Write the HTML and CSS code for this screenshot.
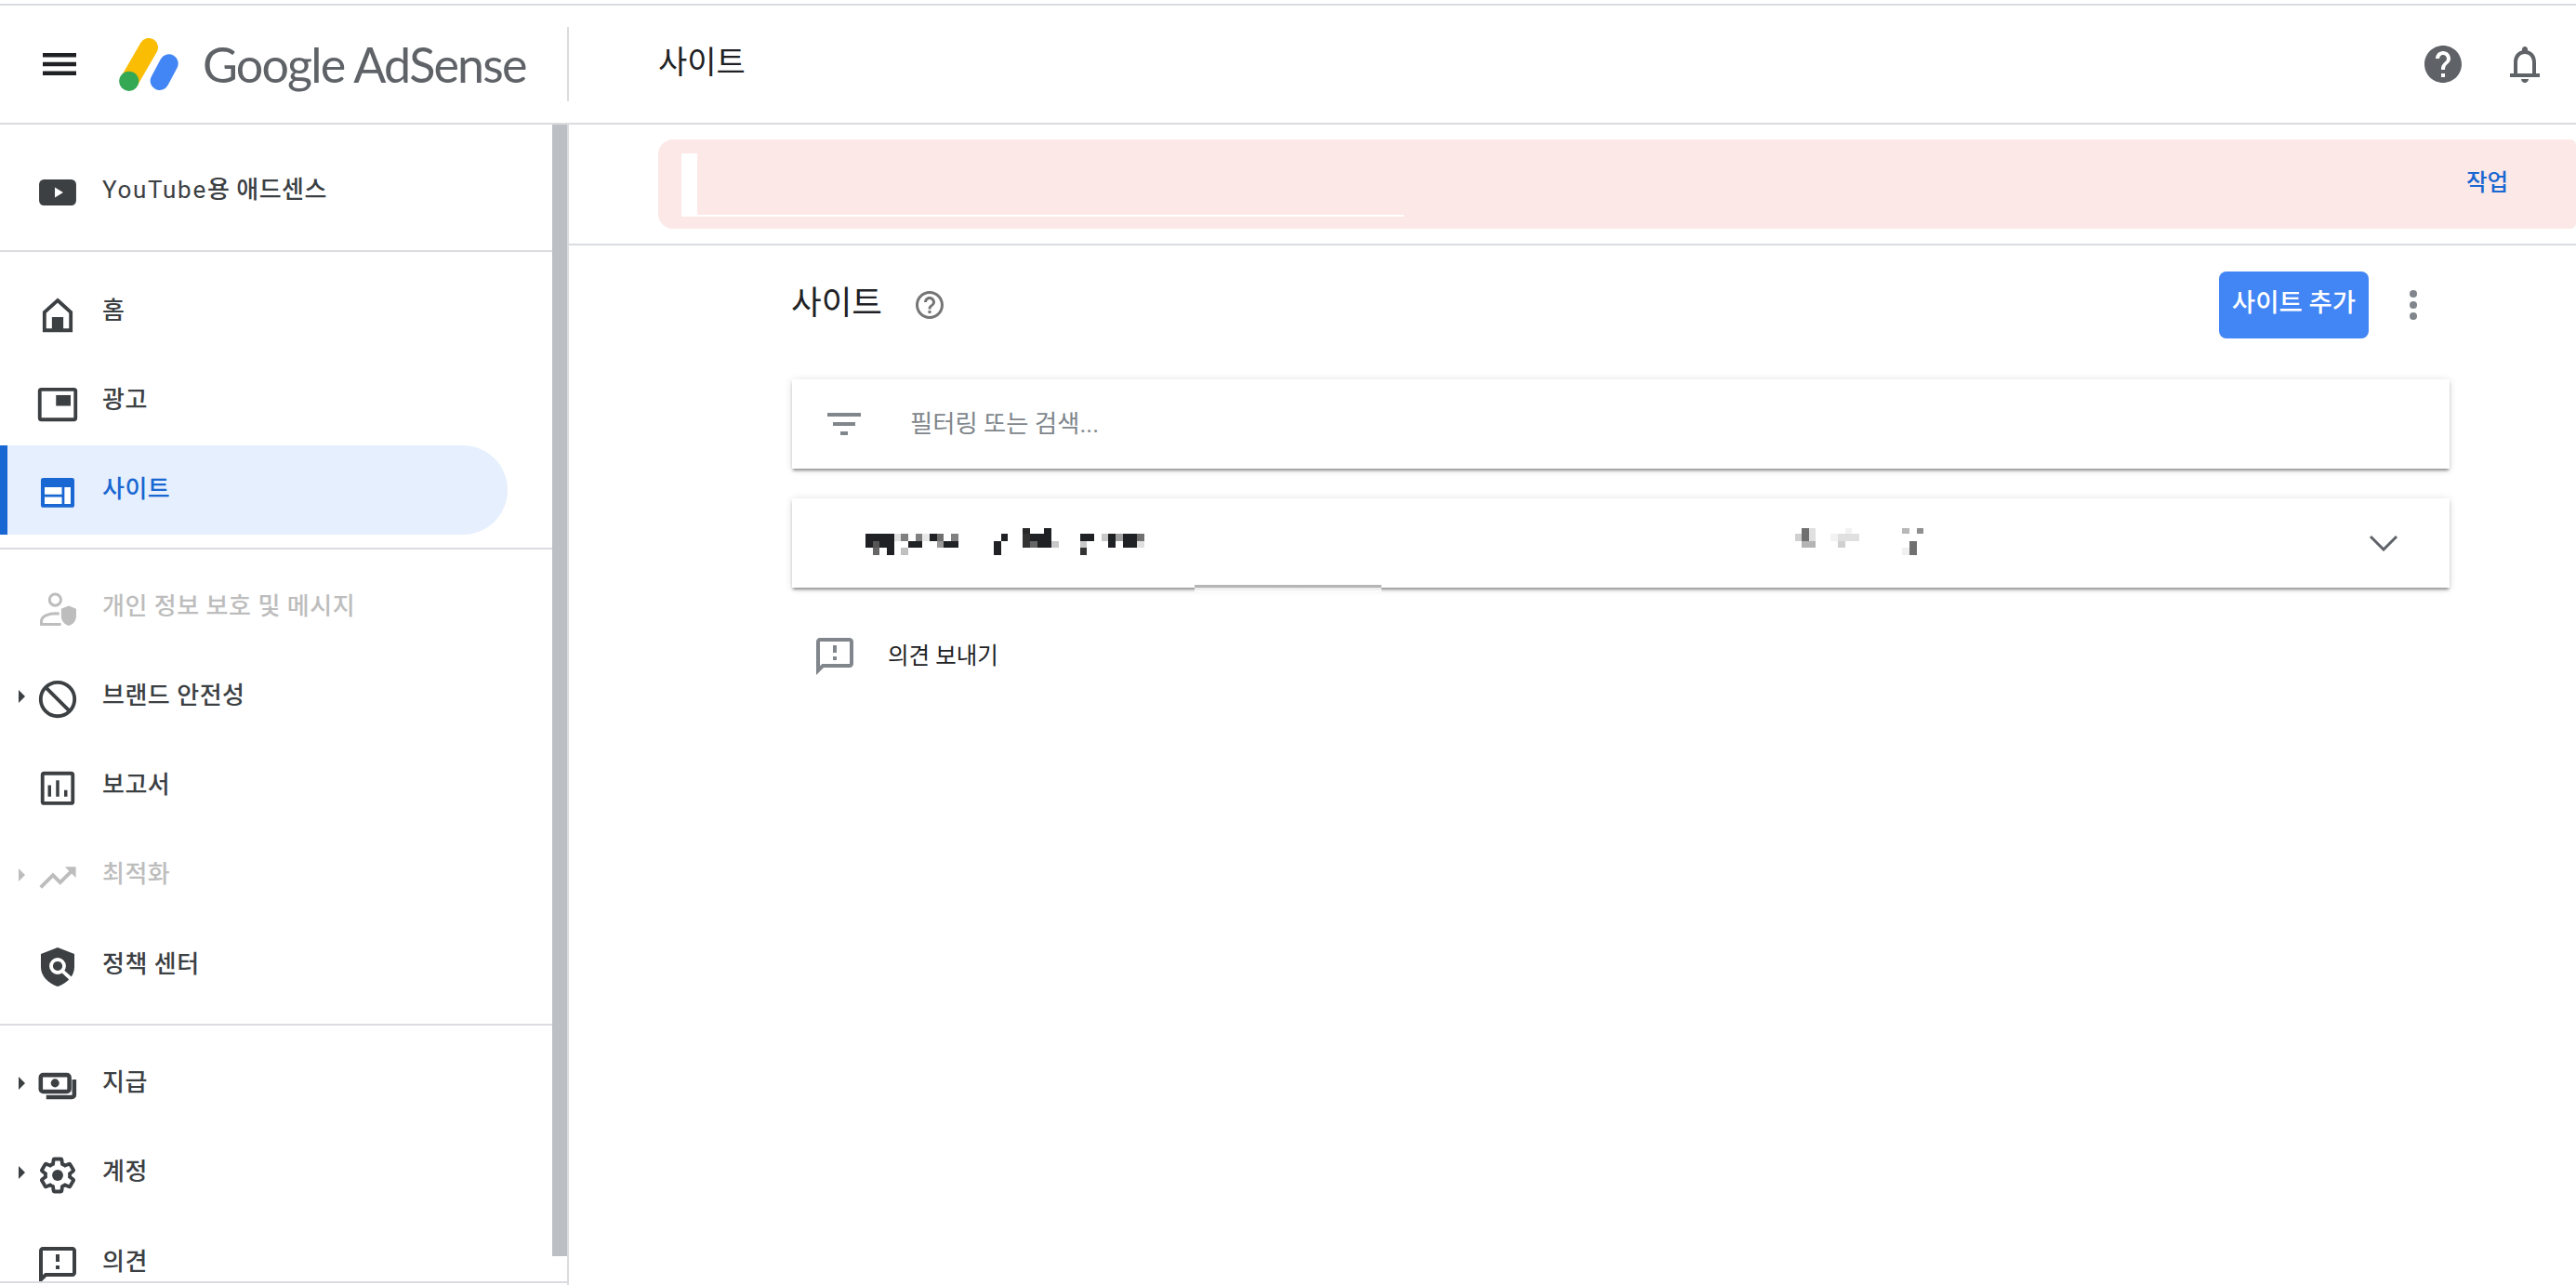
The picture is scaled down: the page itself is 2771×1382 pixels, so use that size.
FILE: index.html
```html
<!DOCTYPE html>
<html lang="ko">
<head>
<meta charset="utf-8">
<title>Google AdSense - 사이트</title>
<link rel="stylesheet" href="styles.css">
</head>
<body>
<div class="app">
  <div class="topline"></div>
  <header class="topbar">
    <div class="brand">
      <svg class="hamburger" viewBox="0 0 36 24"><rect width="36" height="4.5"/><rect y="9.75" width="36" height="4.5"/><rect y="19.5" width="36" height="4.5"/></svg>
      <svg class="logo" viewBox="0 0 64 57">
        <path d="M11.3 45.7 32 10" stroke="#fbbc04" stroke-width="20" stroke-linecap="round" fill="none"/>
        <circle cx="10.8" cy="46.3" r="10.6" fill="#34a853"/>
        <path d="M43.7 46 53.7 27.3" stroke="#4285f4" stroke-width="20" stroke-linecap="round" fill="none"/>
      </svg>
      <span class="wordmark">Google AdSense</span>
    </div>
    <div class="bar-divider"></div>
    <div class="page-title">사이트</div>
    <svg class="top-help" viewBox="2 2 20 20"><path d="M12 2C6.48 2 2 6.48 2 12s4.48 10 10 10 10-4.48 10-10S17.52 2 12 2zm1 17h-2v-2h2v2zm2.07-7.75l-.9.92C13.45 12.9 13 13.5 13 15h-2v-.5c0-1.1.45-2.1 1.17-2.83l1.24-1.26c.37-.36.59-.86.59-1.41 0-1.1-.9-2-2-2s-2 .9-2 2H8c0-2.21 1.79-4 4-4s4 1.79 4 4c0 .88-.36 1.68-.93 2.25z"/></svg>
    <svg class="top-bell" viewBox="4 2.5 16 19.5"><path fill-rule="evenodd" d="M12 22c1.1 0 2-.9 2-2h-4c0 1.1.9 2 2 2zM4 17h2v-6c0-3.07 1.63-5.64 4.5-6.32V4c0-.83.67-1.5 1.5-1.5s1.5.67 1.5 1.5v.68C16.37 5.36 18 7.93 18 11v6h2v2H4zM16 17v-6c0-2.48-1.51-4.5-4-4.5S8 8.52 8 11v6z"/></svg>
  </header>
  <div class="workspace">
    <aside class="sidebar">
      <nav class="nav">
        <div class="nav-section nav-first">
          <a class="nav-row"><span class="caret-slot"></span>
            <svg class="nav-icon" viewBox="0 0 24 24"><rect x=".6" y="4" width="22.8" height="16" rx="3"/><path class="cut" d="M10.3 8.8 15.4 12l-5.1 3.2z"/></svg>
            <span class="nav-label"><span class="latin">YouTube</span>용 애드센스</span></a>
        </div>
        <div class="nav-section nav-second">
          <a class="nav-row"><span class="caret-slot"></span>
            <svg class="nav-icon" viewBox="0 0 24 24"><path class="line" d="M12 4 20.1 11.4V22.4H3.9V11.4z"/><rect x="8.5" y="14.3" width="7" height="8.6"/></svg>
            <span class="nav-label">홈</span></a>
          <a class="nav-row"><span class="caret-slot"></span>
            <svg class="nav-icon" viewBox="0 0 24 24"><rect class="line" x="1" y="3.9" width="22" height="18.5" rx="1"/><rect x="11" y="7.4" width="9" height="6.6"/></svg>
            <span class="nav-label">광고</span></a>
          <a class="nav-row is-active"><span class="caret-slot"></span>
            <svg class="nav-icon" viewBox="0 0 24 24"><rect x="1.7" y="2.9" width="20.6" height="18.1" rx="1.5"/><path class="cut" d="M4 8.6h10.6V13H4zM4 14.6h10.6v4.3H4zM16.2 8.6H20v10.3h-3.8z"/></svg>
            <span class="nav-label">사이트</span></a>
        </div>
        <div class="nav-section nav-third">
          <a class="nav-row is-disabled"><span class="caret-slot"></span>
            <svg class="nav-icon" viewBox="0 0 24 24"><circle class="thin" cx="10.5" cy="6.3" r="3.5"/><path class="thin" d="M2 21.2v-1.7c0-3 4.5-4.8 9-4.8l2 .2"/><path class="thin" d="M1.2 21.4H14"/><path d="M18.8 10l4.6 1.8v4.5c0 3-2 5.2-4.6 6-2.6-.8-4.6-3-4.6-6v-4.5z"/></svg>
            <span class="nav-label">개인 정보 보호 및 메시지</span></a>
          <a class="nav-row"><span class="caret-slot"><i class="caret"></i></span>
            <svg class="nav-icon" viewBox="0 0 24 24"><circle class="line" cx="12" cy="12" r="10.4"/><path class="line" d="M4.6 4.6 19.4 19.4"/></svg>
            <span class="nav-label">브랜드 안전성</span></a>
          <a class="nav-row"><span class="caret-slot"></span>
            <svg class="nav-icon" viewBox="0 0 24 24"><rect class="line" x="2.7" y="2.7" width="18.6" height="18.4" rx="1"/><path d="M6 10h2v7H6zM11 7h2v10h-2zM16 13h2v4h-2z"/></svg>
            <span class="nav-label">보고서</span></a>
          <a class="nav-row is-disabled"><span class="caret-slot"><i class="caret"></i></span>
            <svg class="nav-icon" viewBox="0 0 24 24"><path transform="translate(-1.44 -1.44) scale(1.12)" d="M16 6l2.29 2.29-4.88 4.88-4-4L2 16.59 3.41 18l6-6 4 4 6.3-6.29L22 12V6z"/></svg>
            <span class="nav-label">최적화</span></a>
          <a class="nav-row"><span class="caret-slot"></span>
            <svg class="nav-icon" viewBox="0 0 24 24"><path d="M12 0 22.3 4v8c0 5.5-4.4 10-10.3 12C6 22 1.7 17.5 1.7 12V4z"/><circle class="white-ring" cx="12" cy="11.4" r="4"/><path class="white-ring" d="M15 14.5 21 20"/></svg>
            <span class="nav-label">정책 센터</span></a>
        </div>
        <div class="nav-section nav-fourth">
          <a class="nav-row"><span class="caret-slot"><i class="caret"></i></span>
            <svg class="nav-icon" viewBox="0 0 24 24"><rect class="heavy" x="1.6" y="5.2" width="17.6" height="10.2" rx="1.5"/><circle cx="10.4" cy="10.2" r="2.6"/><path class="heavy" d="M22.2 8v9.5a1.3 1.3 0 0 1-1.3 1.3H5"/></svg>
            <span class="nav-label">지급</span></a>
          <a class="nav-row"><span class="caret-slot"><i class="caret"></i></span>
            <svg class="nav-icon" viewBox="0 0 24 24"><path class="line" d="M19.43 12.98c.04-.32.07-.64.07-.98s-.03-.66-.07-.98l2.11-1.65c.19-.15.24-.42.12-.64l-2-3.46c-.12-.22-.39-.3-.61-.22l-2.49 1c-.52-.4-1.08-.73-1.69-.98l-.38-2.65C14.46 2.18 14.25 2 14 2h-4c-.25 0-.46.18-.49.42l-.38 2.65c-.61.25-1.17.59-1.69.98l-2.49-1c-.23-.09-.49 0-.61.22l-2 3.46c-.13.22-.07.49.12.64l2.11 1.65c-.04.32-.07.65-.07.98s.03.66.07.98l-2.11 1.65c-.19.15-.24.42-.12.64l2 3.46c.12.22.39.3.61.22l2.49-1c.52.4 1.08.73 1.69.98l.38 2.65c.03.24.24.42.49.42h4c.25 0 .46-.18.49-.42l.38-2.65c.61-.25 1.17-.59 1.69-.98l2.49 1c.23.09.49 0 .61-.22l2-3.46c.12-.22.07-.49-.12-.64l-2.11-1.65z"/><circle cx="12" cy="12" r="3.4"/></svg>
            <span class="nav-label">계정</span></a>
          <a class="nav-row"><span class="caret-slot"></span>
            <svg class="nav-icon" viewBox="2 2 20 20"><path d="M20 2H4c-1.1 0-1.99.9-1.99 2L2 22l4-4h14c1.1 0 2-.9 2-2V4c0-1.1-.9-2-2-2zm0 14H5.17L4 17.17V4h16v12zM11 12h2v2h-2zm0-6h2v4h-2z"/></svg>
            <span class="nav-label">의견</span></a>
        </div>
      </nav>
      <div class="scroll-track"><div class="scroll-thumb"></div></div>
    </aside>
    <main class="main">
      <div class="banner-wrap">
        <div class="banner">
          <div class="banner-strip"></div>
          <div class="banner-rule"></div>
          <a class="banner-action">작업</a>
        </div>
      </div>
      <div class="content">
        <div class="title-row">
          <h1 class="title">사이트</h1>
          <svg class="title-help" viewBox="2 2 20 20"><path d="M11 18h2v-2h-2v2zm1-16C6.48 2 2 6.48 2 12s4.48 10 10 10 10-4.48 10-10S17.52 2 12 2zm0 18c-4.41 0-8-3.59-8-8s3.59-8 8-8 8 3.59 8 8-3.59 8-8 8zm0-14c-2.21 0-4 1.79-4 4h2c0-1.1.9-2 2-2s2 .9 2 2c0 2-3 1.75-3 5h2c0-2.25 3-2.5 3-5 0-2.21-1.79-4-4-4z"/></svg>
          <button class="add-btn"><span class="add-btn-text">사이트 추가</span></button>
          <div class="kebab"><i></i><i></i><i></i></div>
        </div>
        <div class="card filter-card">
          <svg class="filter-icon" viewBox="0 0 36 24"><rect width="36" height="4"/><rect x="6" y="10" width="24" height="4"/><rect x="14" y="20" width="8" height="4"/></svg>
          <span class="filter-text">필터링 또는 검색...</span>
        </div>
        <div class="card site-card">
          <svg class="mosaic-left" viewBox="0 0 960 135" shape-rendering="crispEdges">
            <rect x="33" y="42" width="92" height="23" fill="#202124"/><rect x="125" y="42" width="23" height="23" fill="#e0e0e0"/><rect x="148" y="42" width="23" height="23" fill="#808080"/><rect x="194" y="42" width="23" height="23" fill="#808080"/><rect x="217" y="42" width="23" height="23" fill="#e8e8e8"/><rect x="240" y="42" width="23" height="23" fill="#202124"/><rect x="263" y="42" width="23" height="23" fill="#707070"/><rect x="309" y="42" width="23" height="23" fill="#808080"/>
            <rect x="33" y="65" width="23" height="23" fill="#202124"/><rect x="56" y="65" width="23" height="23" fill="#555"/><rect x="79" y="65" width="46" height="23" fill="#202124"/><rect x="171" y="65" width="46" height="23" fill="#202124"/><rect x="263" y="65" width="23" height="23" fill="#999"/><rect x="286" y="65" width="46" height="23" fill="#202124"/>
            <rect x="56" y="88" width="23" height="22" fill="#666"/><rect x="102" y="88" width="23" height="22" fill="#202124"/><rect x="148" y="88" width="23" height="22" fill="#c0c0c0"/>
            <rect x="470" y="42" width="23" height="23" fill="#202124"/><rect x="447" y="65" width="23" height="45" fill="#202124"/>
            <rect x="541" y="24" width="23" height="18" fill="#2a2a2a"/><rect x="610" y="24" width="23" height="18" fill="#202124"/><rect x="541" y="42" width="23" height="46" fill="#333"/><rect x="564" y="42" width="69" height="23" fill="#202124"/><rect x="564" y="65" width="23" height="23" fill="#666"/><rect x="587" y="65" width="46" height="23" fill="#202124"/><rect x="633" y="65" width="23" height="23" fill="#c8c8c8"/>
            <rect x="725" y="42" width="46" height="23" fill="#202124"/><rect x="725" y="65" width="23" height="23" fill="#c8c8c8"/><rect x="725" y="88" width="23" height="22" fill="#333"/>
            <rect x="794" y="42" width="23" height="23" fill="#c8c8c8"/><rect x="817" y="42" width="23" height="46" fill="#202124"/><rect x="840" y="42" width="23" height="23" fill="#a0a0a0"/><rect x="863" y="42" width="46" height="46" fill="#202124"/><rect x="909" y="42" width="23" height="23" fill="#707070"/><rect x="909" y="65" width="23" height="23" fill="#e0e0e0"/>
          </svg>
          <svg class="mosaic-right" viewBox="0 0 480 135" shape-rendering="crispEdges">
            <rect x="54" y="24" width="23" height="41" fill="#707070"/><rect x="77" y="24" width="23" height="41" fill="#e0e0e0"/><rect x="195" y="24" width="22" height="18" fill="#f2f2f2"/><rect x="379" y="24" width="23" height="18" fill="#b8b8b8"/><rect x="425" y="24" width="23" height="18" fill="#909090"/>
            <rect x="32" y="42" width="22" height="23" fill="#d0d0d0"/><rect x="148" y="42" width="23" height="23" fill="#f2f2f2"/><rect x="171" y="42" width="69" height="23" fill="#e0e0e0"/>
            <rect x="54" y="65" width="46" height="23" fill="#b4b4b4"/><rect x="171" y="65" width="23" height="23" fill="#d0d0d0"/><rect x="402" y="65" width="23" height="45" fill="#707070"/><rect x="379" y="88" width="23" height="22" fill="#f0f0f0"/>
          </svg>
          <svg class="chevron" viewBox="0 0 32 18"><path d="M2 2 16 16 30 2"/></svg>
          <div class="card-smear"></div>
        </div>
        <div class="feedback">
          <svg class="feedback-icon" viewBox="2 2 20 20"><path d="M20 2H4c-1.1 0-1.99.9-1.99 2L2 22l4-4h14c1.1 0 2-.9 2-2V4c0-1.1-.9-2-2-2zm0 14H5.17L4 17.17V4h16v12zM11 12h2v2h-2zm0-6h2v4h-2z"/></svg>
          <span class="feedback-text">의견 보내기</span>
        </div>
      </div>
    </main>
  </div>
</div>
</body>
</html>
```

FILE: styles.css
```css
* { box-sizing: border-box; }
html, body { margin: 0; padding: 0; background: #fff; }
body {
  width: 2771px;
  height: 1382px;
  overflow: hidden;
  font-family: Roboto, "Noto Sans CJK KR", sans-serif;
  color: #202124;
}
svg { display: block; flex: none; }

.app { display: flex; flex-direction: column; height: 100%; }
.topline { height: 2px; margin-top: 4px; background: #dadce0; flex: none; }

.topbar {
  display: flex;
  align-items: center;
  flex: none;
  height: 128px;
  border-bottom: 2px solid #dadce0;
}
.brand { display: flex; align-items: center; width: 610px; padding-left: 46px; }
.hamburger { width: 36px; height: 24px; fill: #202124; }
.logo { width: 64px; height: 57px; margin-left: 46px; }
.wordmark {
  margin-left: 26px;
  font-family: Lato, sans-serif;
  font-size: 52px;
  letter-spacing: -1.8px;
  color: #5f6368;
  line-height: 1;
  white-space: nowrap;
}
.bar-divider { width: 2px; height: 80px; background: #dadce0; }
.page-title { margin-left: 96px; margin-bottom: 5px; font-size: 34px; color: #202124; line-height: 1; }
.top-help { width: 40px; height: 40px; margin-left: auto; fill: #5f6368; }
.top-bell { width: 32px; height: 39px; margin-left: 52px; margin-right: 39px; fill: #5f6368; }

.workspace { display: flex; flex: 1; min-height: 0; }
.sidebar { display: flex; width: 610px; margin-bottom: 2px; border-bottom: 2px solid #dadce0; overflow: hidden; }
.nav { width: 594px; flex: none; overflow: hidden; }
.scroll-track { width: 16px; flex: none; }
.scroll-thumb { height: 1217px; background: #bcbfc3; }

.nav-section { border-bottom: 2px solid #dadce0; }
.nav-first { padding: 22px 0 17px; }
.nav-second { padding: 15px 0 14px; }
.nav-third { padding: 13.5px 0 16px; }
.nav-fourth { padding: 13.5px 0 0; border-bottom: 0; }

.nav-row {
  display: flex;
  align-items: center;
  height: 96.2px;
  width: 546px;
  color: #3c4043;
  fill: #3c4043;
  stroke: none;
}
.caret-slot { display: flex; align-items: center; width: 41px; height: 14px; padding-left: 20px; flex: none; }
.caret { display: block; border-left: 7px solid currentColor; border-top: 7px solid transparent; border-bottom: 7px solid transparent; }
.nav-icon { width: 42px; height: 42px; margin-top: 6px; overflow: visible; }
.nav-label { margin-left: 27px; margin-bottom: 1px; font-size: 26px; font-weight: 500; letter-spacing: .5px; white-space: nowrap; line-height: 1; }
.latin { font-weight: 400; letter-spacing: 1.7px; }
.nav-first .nav-icon { margin-top: 6px; }
.nav-fourth .nav-row:last-child .nav-icon { width: 40px; height: 40px; margin: 7px 1px 0; }

.line { fill: none; stroke: currentColor; stroke-width: 2.2; }
.heavy { fill: none; stroke: currentColor; stroke-width: 2.6; }
.thin { fill: none; stroke: currentColor; stroke-width: 1.7; }
.cut { fill: #fff; }
.white-ring { fill: none; stroke: #fff; stroke-width: 2.2; }
.nav-row.is-active {
  color: #1967d2;
  fill: #1967d2;
  background: #e6effd;
  border-radius: 0 48px 48px 0;
  box-shadow: inset 8px 0 0 #1967d2;
}
.nav-row.is-disabled { color: #bdbdbd; fill: #bdbdbd; }

.main { flex: 1; min-width: 0; border-left: 2px solid #dadce0; }
.banner-wrap { padding: 16px 0; padding-left: 96px; border-bottom: 2px solid #dadce0; height: 130px; }
.banner {
  display: flex;
  align-items: center;
  height: 96px;
  padding: 2px 73px 0 25px;
  background: #fce8e6;
  border-radius: 16px 6px 6px 16px;
}
.banner-strip { width: 17px; height: 68px; background: #fff; }
.banner-rule { width: 760px; height: 2px; margin-top: 66px; background: #fff; }
.banner-action { margin-left: auto; margin-bottom: 4px; font-size: 24.5px; font-weight: 500; color: #1967d2; line-height: 1; }

.content { padding: 28px 136px 0 240px; }
.title-row { display: flex; align-items: center; height: 72px; margin-bottom: 44px; }
.title { margin: 0 0 2px -1px; font-size: 35.5px; font-weight: 400; color: #202124; line-height: 1; }
.title-help { width: 30px; height: 30px; margin-left: 36px; fill: #757575; }
.add-btn {
  display: flex;
  align-items: center;
  justify-content: center;
  margin-left: auto;
  width: 161px;
  height: 72px;
  padding: 0 0 4px;
  border: 0;
  border-radius: 8px;
  background: #4285f4;
  color: #fff;
  font-family: inherit;
  font-size: 27.5px;
  font-weight: 500;
  white-space: nowrap;
}
.add-btn-text { line-height: 1; }
.kebab { display: flex; flex-direction: column; gap: 4px; margin-left: 44px; margin-right: 35px; }
.kebab i { display: block; width: 8px; height: 8px; border-radius: 50%; background: #80868b; }

.card {
  position: relative;
  display: flex;
  align-items: center;
  height: 96px;
  background: #fff;
  box-shadow: 0 3px 3px -1px rgba(0,0,0,.4), 0 1px 8px rgba(0,0,0,.14);
}
.filter-card { padding-left: 38px; margin-bottom: 32px; }
.filter-icon { width: 36px; height: 24px; fill: #80868b; }
.filter-text { margin-left: 53px; font-size: 26.3px; color: #80868b; line-height: 1; }
.site-card { padding-left: 68px; }
.mosaic-left { width: 320px; height: 45px; margin-bottom: 3px; }
.mosaic-right { width: 160px; height: 45px; margin-left: 680px; margin-bottom: 3px; }
.chevron { width: 32px; height: 18px; margin-left: auto; margin-right: 55px; fill: none; stroke: #5f6368; stroke-width: 3; }
.card-smear {
  position: absolute;
  left: 433px;
  bottom: -5px;
  width: 201px;
  height: 8px;
  background: linear-gradient(#b5b5b5 0, #b5b5b5 35%, #e9e9e9 40%, #fff 100%);
}
.feedback { display: flex; align-items: center; margin: 54px 0 0 26px; }
.feedback-icon { width: 40px; height: 40px; fill: #80868b; }
.feedback-text { margin-left: 37px; font-size: 24.5px; color: #202124; line-height: 1; }
```
